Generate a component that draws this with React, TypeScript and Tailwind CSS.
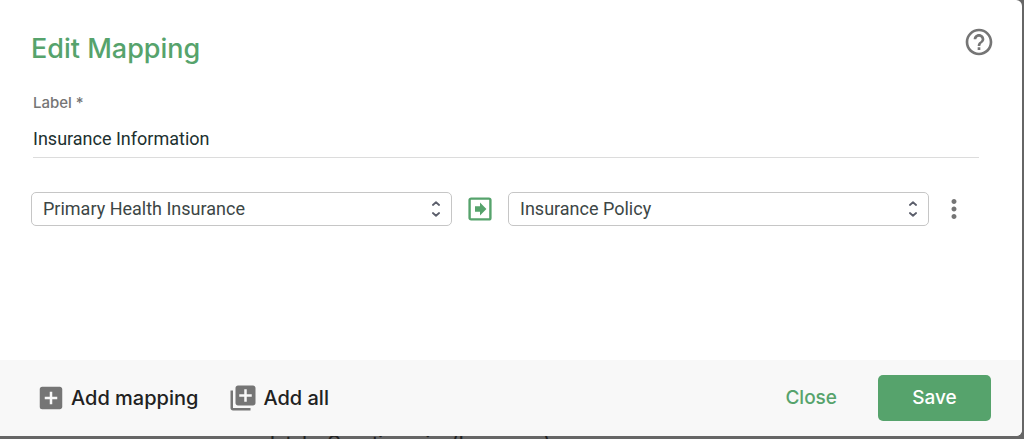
import { useState } from "react";
import { MdAddBox, MdHelpOutline, MdLibraryAdd, MdMoreVert } from "react-icons/md";

type FieldSelectProps = {
    label: string;
    value: string;
    options: string[];
    onChange: (value: string) => void;
};

function FieldSelect({ label, value, options, onChange }: FieldSelectProps) {
    return (
        <div className="relative min-w-0 flex-1">
            <select
                aria-label={label}
                value={value}
                onChange={(e) => onChange(e.target.value)}
                className="block h-[34px] w-full appearance-none rounded-[5px] border border-[#c6c6c6] bg-white pr-9 pb-[2px] pl-[11px] font-['Roboto',sans-serif] text-[18px] text-[#3c4645]"
            >
                {options.map((option) => (
                    <option key={option}>{option}</option>
                ))}
            </select>
            <svg
                viewBox="0 0 10 18"
                className="pointer-events-none absolute inset-y-0 right-[11px] my-auto h-[18px] w-[10px]"
                fill="none"
                stroke="#5b5e6b"
                strokeWidth="1.8"
                strokeLinecap="round"
                strokeLinejoin="round"
            >
                <path d="M1.9 5 5 2.3 8.1 5M1.9 13 5 15.7 8.1 13" />
            </svg>
        </div>
    );
}

function ArrowBox() {
    return (
        <svg viewBox="0 0 24 24" className="h-6 w-6 shrink-0">
            <rect x="1.6" y="1.6" width="20.8" height="20.8" rx="1.5" fill="none" stroke="#56a36c" strokeWidth="2.4" />
            <path d="M7 9.2h5V5.6L18.4 12 12 18.4v-3.6H7z" fill="#56a36c" />
        </svg>
    );
}

export default function App() {
    const [label, setLabel] = useState("Insurance Information");
    const [source, setSource] = useState("Primary Health Insurance");
    const [target, setTarget] = useState("Insurance Policy");

    return (
        <div className="flex min-h-screen flex-col bg-[#666666] font-['Inter',sans-serif]">
            <div role="dialog" aria-labelledby="title" className="mr-[2px] flex flex-1 flex-col overflow-hidden rounded-r-md bg-white">
                {/* Header */}
                <div className="flex items-start justify-between pt-[26px] pr-[27px] pl-[31px]">
                    <h1 id="title" className="pt-[5px] text-[27px] leading-9 font-medium text-[#56a36c]">Edit Mapping</h1>
                    <button type="button" aria-label="Help" className="text-[#757575]">
                        <MdHelpOutline size={32} />
                    </button>
                </div>

                {/* Form */}
                <form className="flex-1 pt-[27px] pr-[43px] pb-8 pl-[31px]">
                    <div className="pl-[2px]">
                        <label htmlFor="label" className="block text-[15px] leading-[18px] font-medium text-[#757575]">Label *</label>
                        <input
                            id="label"
                            value={label}
                            onChange={(e) => setLabel(e.target.value)}
                            className="mt-3 block h-[34px] w-full border-b border-[#dcdcdc] pb-1 font-['Roboto',sans-serif] text-[18px] text-[#20302f] outline-none"
                        />
                    </div>
                    <div className="mt-[34px] flex items-center">
                        <FieldSelect
                            label="Source"
                            value={source}
                            options={["Primary Health Insurance"]}
                            onChange={setSource}
                        />
                        <div className="flex w-14 justify-center">
                            <ArrowBox />
                        </div>
                        <FieldSelect
                            label="Target"
                            value={target}
                            options={["Insurance Policy"]}
                            onChange={setTarget}
                        />
                        <button type="button" aria-label="More options" className="flex w-[50px] justify-center text-[#757575]">
                            <MdMoreVert size={30} />
                        </button>
                    </div>
                </form>

                {/* Footer */}
                <div className="flex h-[76px] items-center justify-between bg-[#f8f8f8] pr-[31px] pl-9 font-medium">
                    <div className="flex items-center gap-[30px] text-[20px] text-[#212121]">
                        <button type="button" className="flex items-center gap-[5px]">
                            <MdAddBox size={30} className="text-[#757575]" />
                            Add mapping
                        </button>
                        <button type="button" className="flex items-center gap-[5px]">
                            <MdLibraryAdd size={30} className="text-[#757575]" />
                            Add all
                        </button>
                    </div>
                    <div className="flex items-center gap-[41px] text-[19px]">
                        <button type="button" className="text-[#56a36c]">Close</button>
                        <button type="button" className="h-[46px] w-[113px] rounded-[5px] bg-[#56a36c] text-white">Save</button>
                    </div>
                </div>
            </div>

            {/* Page row behind the dialog */}
            <div aria-hidden="true" className="h-[3px] overflow-hidden pl-[270px] text-[18px] leading-[14px] font-medium text-[#222222]">
                Intake Questionnaire (Insurance)
            </div>
        </div>
    );
}
